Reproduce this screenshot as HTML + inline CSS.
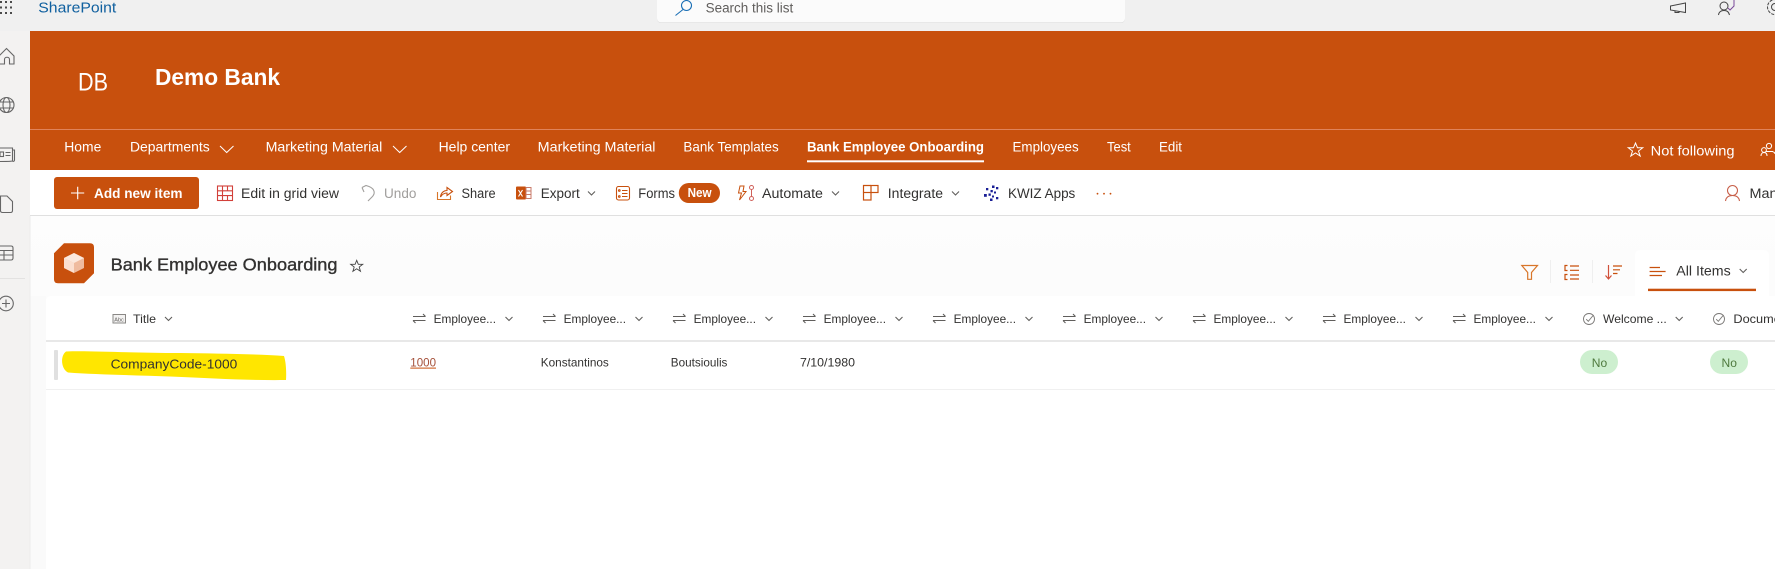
<!DOCTYPE html>
<html lang="en">
<head>
<meta charset="utf-8">
<title>Bank Employee Onboarding</title>
<style>
html,body{margin:0;padding:0;width:1775px;height:569px;overflow:hidden;background:#fff}
svg{display:block;position:absolute;left:0;top:0}
text{font-family:"Liberation Sans",sans-serif;white-space:pre}
.nav{font-size:14px;fill:#fff}
.cmd{font-size:13.5px;fill:#323130}
.hd{font-size:12px;fill:#323130}
.cell{font-size:12px;fill:#323130}
.ch{fill:none;stroke:#605e5c;stroke-width:1.1}
.rail{fill:none;stroke:#666;stroke-width:1.1}
.or{fill:none;stroke:#c8500d;stroke-width:1.2}
</style>
</head>
<body>
<svg width="1775" height="569" viewBox="0 0 1775 569" xmlns="http://www.w3.org/2000/svg">
<defs>
<linearGradient id="pg" x1="0" y1="0" x2="0" y2="1"><stop offset="0" stop-color="#fdfdfd"/><stop offset="1" stop-color="#f8f8f8"/></linearGradient>
<g id="swap" fill="none" stroke="#605e5c" stroke-width="1.1"><path d="M0.5 3.5H13M10.5 1L13 3.5"/><path d="M13 7.5H0.5M3 10L0.5 7.5"/></g>
<g id="chev"><path class="ch" d="M0 0L3.5 3.5L7 0"/></g>
<g id="chk" fill="none" stroke="#7a7876" stroke-width=".9"><circle cx="6" cy="6" r="5.5"/><path d="M3.2 6.2L5.3 8.3L10.5 2"/></g>
</defs>

<!-- backgrounds -->
<rect width="1775" height="569" fill="#fff"/>
<rect width="1775" height="31" fill="#f0f0f0"/>
<rect y="31" width="30" height="538" fill="#f3f2f1"/>
<rect x="30" y="31" width="1745" height="139" fill="#c8500d"/>
<rect x="30" y="129" width="1745" height="1" fill="#e0835a"/>
<rect x="30" y="170" width="1745" height="45" fill="#fff"/>
<rect x="30" y="215" width="1745" height="1.4" fill="#e0e0e0"/>
<rect x="30" y="216" width="1745" height="353" fill="url(#pg)"/>
<rect x="30" y="296" width="16" height="273" fill="#fafafa"/>
<rect x="29.5" y="216" width="1" height="353" fill="#ececec"/>

<!-- top bar -->
<g fill="#4a4a4a"><rect x="0" y="1" width="2" height="2"/><rect x="5" y="1" width="2" height="2"/><rect x="10" y="1" width="2" height="2"/><rect x="0" y="6.5" width="2" height="2"/><rect x="5" y="6.5" width="2" height="2"/><rect x="10" y="6.5" width="2" height="2"/><rect x="0" y="12" width="2" height="2"/><rect x="5" y="12" width="2" height="2"/><rect x="10" y="12" width="2" height="2"/></g>
<text x="38.3" y="12.7" font-size="15" fill="#10609f" textLength="78" lengthAdjust="spacingAndGlyphs">SharePoint</text>
<rect x="657" y="-6" width="468" height="29" rx="4" fill="#cfcfcf" opacity=".6"/>
<rect x="657" y="-6" width="468" height="28.4" rx="4" fill="#fbfbfb"/>
<circle cx="686.5" cy="5.5" r="5" fill="none" stroke="#1a6fb5" stroke-width="1.1"/>
<path d="M683 9.5L675.5 15.5" fill="none" stroke="#1a6fb5" stroke-width="1.1"/>
<text x="705.6" y="12.7" font-size="13.5" fill="#605e5c" textLength="87.6" lengthAdjust="spacingAndGlyphs">Search this list</text>
<g fill="none" stroke="#444" stroke-width="1">
<path d="M1670.5 6L1685.5 3V12.5L1670.5 10Z"/><path d="M1675 10.5V12.5H1679V11"/>
<circle cx="1724" cy="6" r="4"/><path d="M1718.5 15C1719 11.5 1721 10.5 1724 10.5C1727 10.5 1728.5 11.5 1729.5 15"/>
</g>
<path d="M1728 8L1730 10L1734 6V0" fill="none" stroke="#7a4a9a" stroke-width="1"/>
<circle cx="1775" cy="7" r="7.5" fill="none" stroke="#444" stroke-width="1" stroke-dasharray="3 1.2"/>
<circle cx="1775" cy="7" r="3.5" fill="none" stroke="#444" stroke-width="1"/>

<!-- left rail -->
<path class="rail" d="M-1 56L6.5 48.5L14 56V64H9.5V59.5C9.5 56.5 4.5 56.5 4.5 59.5V64H-1"/>
<g class="rail"><circle cx="6.5" cy="105" r="7.5"/><ellipse cx="6.5" cy="105" rx="3.5" ry="7.5"/><path d="M-1 102H14M-1 108H14"/></g>
<g class="rail"><path d="M-2 148H12.5V160.5C12.5 161.5 10 161.5 -2 161.5"/><path d="M12.5 150H14.5V160C14.5 161.5 13 161.5 12.5 161.5"/><rect x="0" y="152" width="3.5" height="4.5"/><path d="M5.5 152.5H10.5M5.5 155.5H10.5"/></g>
<path class="rail" d="M0.5 196H7L12.5 201.5V210.5Q12.5 212.5 10.5 212.5H2.5Q0.5 212.5 0.5 210.5Z"/>
<g class="rail"><path d="M-2 246H11Q13 246 13 248V258Q13 260 11 260H-2"/><path d="M-2 250.5H13M-2 255H13M4 250.5V260"/></g>
<rect x="0" y="278" width="25" height="1" fill="#e3e2e1"/>
<g class="rail"><circle cx="6" cy="303.5" r="7.3"/><path d="M6 299.5V307.5M2 303.5H10"/></g>

<!-- header -->
<text x="78" y="90.7" font-size="25" fill="#fff" textLength="30" lengthAdjust="spacingAndGlyphs">DB</text>
<text x="155" y="85" font-size="23" font-weight="bold" fill="#fff" textLength="125" lengthAdjust="spacingAndGlyphs">Demo Bank</text>

<!-- nav -->
<text class="nav" x="64.3" y="151.7" textLength="37" lengthAdjust="spacingAndGlyphs">Home</text>
<text class="nav" x="130" y="151.7" textLength="79.7" lengthAdjust="spacingAndGlyphs">Departments</text>
<path d="M220 146L226.7 152.5L233.5 146" fill="none" stroke="#fff" stroke-width="1"/>
<text class="nav" x="265.6" y="151.7" textLength="116.7" lengthAdjust="spacingAndGlyphs">Marketing Material</text>
<path d="M393 146L399.7 152.5L406.5 146" fill="none" stroke="#fff" stroke-width="1"/>
<text class="nav" x="438.6" y="151.7" textLength="71.4" lengthAdjust="spacingAndGlyphs">Help center</text>
<text class="nav" x="537.7" y="151.7" textLength="117.8" lengthAdjust="spacingAndGlyphs">Marketing Material</text>
<text class="nav" x="683.4" y="151.7" textLength="95.3" lengthAdjust="spacingAndGlyphs">Bank Templates</text>
<text class="nav" x="807" y="151.7" font-weight="bold" textLength="177" lengthAdjust="spacingAndGlyphs">Bank Employee Onboarding</text>
<rect x="807" y="160.3" width="177" height="2" fill="#fff"/>
<text class="nav" x="1012.5" y="151.7" textLength="66.2" lengthAdjust="spacingAndGlyphs">Employees</text>
<text class="nav" x="1107" y="151.7" textLength="23.8" lengthAdjust="spacingAndGlyphs">Test</text>
<text class="nav" x="1159" y="151.7" textLength="23" lengthAdjust="spacingAndGlyphs">Edit</text>
<path d="M1635.5 143L1637.5 147.8H1642.7L1638.5 151L1640.2 156L1635.5 153L1630.8 156L1632.5 151L1628.3 147.8H1633.5Z" fill="none" stroke="#fff" stroke-width="1"/>
<text class="nav" x="1650.7" y="155.3" textLength="83.8" lengthAdjust="spacingAndGlyphs">Not following</text>
<g fill="none" stroke="#fff" stroke-width="1"><circle cx="1769" cy="146" r="2.6"/><circle cx="1764" cy="150" r="2.4"/><path d="M1761 156C1761 153.5 1762.5 152.5 1764 152.5C1766 152.5 1767 153.5 1767 156"/><path d="M1766 151.5H1773M1772.5 151.5C1774 152 1775 153 1775 154"/></g>

<!-- command bar -->
<rect x="54" y="177" width="145" height="32" rx="3" fill="#c8500d"/>
<path d="M77.7 186.7V199.3M71 193H84.2" stroke="#fff" stroke-width="1.1" fill="none"/>
<text x="94" y="198" font-size="13.5" font-weight="bold" fill="#fff" textLength="88.5" lengthAdjust="spacingAndGlyphs">Add new item</text>

<g fill="none" stroke="#d2403a" stroke-width="1.1"><rect x="217.5" y="186" width="15" height="14.5"/><path d="M217.5 190.8H232.5M217.5 195.6H232.5M222.5 186V200.5M227.5 186V190.8M227.5 195.6V200.5"/></g>
<text class="cmd" x="241" y="198" textLength="98" lengthAdjust="spacingAndGlyphs">Edit in grid view</text>

<path d="M362 187.5L366 185.5L369 186.5C375 189 375.5 193.5 372 197L368 201M362 187.5L364 192" fill="none" stroke="#a19f9d" stroke-width="1.1"/>
<text class="cmd" x="384" y="198" style="fill:#a19f9d" textLength="32.4" lengthAdjust="spacingAndGlyphs">Undo</text>

<path d="M437.5 192V199.5H450.5V195.5" fill="none" stroke="#d8762a" stroke-width="1.1"/>
<path d="M440.5 197C441 192.5 444 190.5 447 190.5V187.5L452.5 191.5L447 195.5V193C444.5 193 442 194.5 440.5 197Z" fill="none" stroke="#c8500d" stroke-width="1.1"/>
<text class="cmd" x="461.5" y="198" textLength="34.1" lengthAdjust="spacingAndGlyphs">Share</text>

<rect x="516" y="186.5" width="10" height="13" rx="1" fill="#c8500d"/>
<path d="M518.5 190L522.5 196.5M522.5 190L518.5 196.5" stroke="#fff" stroke-width="1.1" fill="none"/>
<g fill="none" stroke="#c87a68" stroke-width="1"><rect x="526" y="187.5" width="5" height="11"/><path d="M526 191H531M526 194.5H531"/></g>
<text class="cmd" x="540.8" y="198" textLength="39" lengthAdjust="spacingAndGlyphs">Export</text>
<use href="#chev" x="588" y="191.5"/>

<g fill="none" stroke="#c8500d" stroke-width="1.1"><rect x="616.5" y="186.5" width="13" height="13.5" rx="2"/><path d="M622 190.5H627.5M622 193.5H627.5M622 196.5H627.5"/><circle cx="619.3" cy="190.5" r=".8"/><circle cx="619.3" cy="196.5" r=".8"/></g>
<text class="cmd" x="638.3" y="198" textLength="36.7" lengthAdjust="spacingAndGlyphs">Forms</text>
<rect x="678.8" y="183" width="41.2" height="20" rx="10" fill="#c8500d"/>
<text x="687.6" y="197" font-size="12.5" font-weight="bold" fill="#fff" textLength="24" lengthAdjust="spacingAndGlyphs">New</text>

<g fill="none" stroke-width="1"><path d="M744 186H740L738.5 193H741.5L739.5 200L746 191.5H743Z" stroke="#c8500d"/><circle cx="751.5" cy="187.5" r="2" stroke="#d0605a"/><circle cx="751.5" cy="198.5" r="2" stroke="#d0605a"/><path d="M751.5 189.5V196.5" stroke="#d0605a"/></g>
<text class="cmd" x="762" y="198" textLength="61" lengthAdjust="spacingAndGlyphs">Automate</text>
<use href="#chev" x="832" y="191.5"/>

<g fill="none" stroke="#c8500d" stroke-width="1.2"><rect x="863.5" y="192.5" width="7.5" height="7.5"/><rect x="871" y="185.5" width="7" height="7"/><path d="M863.5 192.5V185.5H871"/></g>
<text class="cmd" x="887.8" y="198" textLength="55.2" lengthAdjust="spacingAndGlyphs">Integrate</text>
<use href="#chev" x="952" y="191.5"/>

<g fill="#1a1f96"><rect x="992" y="185.5" width="2.5" height="2.5"/><rect x="996" y="187" width="2.3" height="2.3"/><rect x="986" y="188" width="2.3" height="2.3"/><rect x="990.5" y="190" width="2.3" height="2.3"/><rect x="994" y="191.5" width="2" height="2"/><rect x="984" y="194" width="2.8" height="2.8"/><rect x="988.5" y="193.5" width="2.3" height="2.3"/><rect x="992" y="195.5" width="2" height="2"/><rect x="996" y="197" width="2.3" height="2.3"/><rect x="990" y="198.5" width="2.5" height="2.5"/></g>
<text class="cmd" x="1008" y="198" textLength="67.3" lengthAdjust="spacingAndGlyphs">KWIZ Apps</text>
<g fill="#c8500d"><circle cx="1097.5" cy="193.7" r=".9"/><circle cx="1104" cy="193.7" r=".9"/><circle cx="1110.5" cy="193.7" r=".9"/></g>

<g fill="none" stroke="#c8604a" stroke-width="1.1"><circle cx="1732.5" cy="190.5" r="5"/><path d="M1725.5 201C1726 197.5 1728.5 195.5 1732.5 195.5C1736.5 195.5 1739 197.5 1739.5 201"/></g>
<text class="cmd" x="1749.5" y="198" textLength="28" lengthAdjust="spacingAndGlyphs">Man</text>

<!-- list heading -->
<path d="M64 243.3H90Q94 243.3 94 247.3V273.3L84 283.3H58Q54 283.3 54 279.3V253.3Z" fill="#c8500d"/>
<path d="M74 253L84 258V268L74 273L64 268V258Z" fill="#efbb9f"/>
<path d="M64 258L74 263L74 273L64 268Z" fill="#fbdfd0"/>
<path d="M74 253L84 258L74 263L64 258Z" fill="#fbe8dd"/>
<text x="110.6" y="270.7" font-size="17.5" fill="#323130" stroke="#323130" stroke-width=".35" textLength="226.9" lengthAdjust="spacingAndGlyphs">Bank Employee Onboarding</text>
<path d="M356.7 260.3L358.3 264.3H362.7L359.2 267L360.5 271.3L356.7 268.8L352.9 271.3L354.2 267L350.7 264.3H355.1Z" fill="none" stroke="#444" stroke-width=".9"/>

<!-- right tools -->
<path d="M1521.8 265.5H1537.5L1531.5 272.5V279.3H1527.7V272.5Z" fill="none" stroke="#d8762a" stroke-width="1.2"/>
<rect x="1550" y="260" width="1" height="23" fill="#efefef"/>
<g class="or"><path d="M1570 266H1579M1570 270.3H1579M1570 275H1579M1570 279H1579"/><path d="M1567.5 265.5H1565V270.5H1567.5M1567.5 274.5H1565V279.5H1567.5"/></g>
<rect x="1592" y="260" width="1" height="23" fill="#efefef"/>
<g class="or"><path d="M1608.5 265V278.5M1605.5 275.5L1608.5 279L1611.5 275.5" stroke="#d0503a"/><path d="M1613 266H1622M1613 269.8H1620M1613 273.5H1617.5"/></g>
<path d="M1635 296V256Q1635 250 1641 250H1763Q1769 250 1769 256V296Z" fill="#fff"/>
<g class="or"><path d="M1649.6 267.5H1660M1649.6 271.5H1665.6M1649.6 275.5H1662"/></g>
<text x="1676.3" y="275.7" font-size="13.5" fill="#323130" textLength="54.4" lengthAdjust="spacingAndGlyphs">All Items</text>
<use href="#chev" x="1739.7" y="269"/>
<rect x="1648" y="288.7" width="108" height="2.4" fill="#c8500d"/>

<!-- card -->
<path d="M46 569V301Q46 296 51 296H1775V569Z" fill="#fff"/>
<path d="M1635 296H1769V300H1635Z" fill="#fff"/>

<!-- column header -->
<g fill="none" stroke="#8a8886" stroke-width="1"><rect x="113" y="314.5" width="12.5" height="8.5" fill="#f3f2f1"/></g>
<text x="114.3" y="321.3" font-size="5.5" fill="#605e5c">Abc</text>
<text class="hd" x="133" y="323" textLength="23" lengthAdjust="spacingAndGlyphs">Title</text>
<use href="#chev" x="165" y="317"/>

<use href="#swap" x="412.5" y="313"/><text class="hd" x="433.6" y="323" textLength="62.4" lengthAdjust="spacingAndGlyphs">Employee...</text><use href="#chev" x="505.5" y="317"/>
<use href="#swap" x="542.5" y="313"/><text class="hd" x="563.6" y="323" textLength="62.4" lengthAdjust="spacingAndGlyphs">Employee...</text><use href="#chev" x="635.5" y="317"/>
<use href="#swap" x="672.5" y="313"/><text class="hd" x="693.6" y="323" textLength="62.4" lengthAdjust="spacingAndGlyphs">Employee...</text><use href="#chev" x="765.5" y="317"/>
<use href="#swap" x="802.5" y="313"/><text class="hd" x="823.6" y="323" textLength="62.4" lengthAdjust="spacingAndGlyphs">Employee...</text><use href="#chev" x="895.5" y="317"/>
<use href="#swap" x="932.5" y="313"/><text class="hd" x="953.6" y="323" textLength="62.4" lengthAdjust="spacingAndGlyphs">Employee...</text><use href="#chev" x="1025.5" y="317"/>
<use href="#swap" x="1062.5" y="313"/><text class="hd" x="1083.6" y="323" textLength="62.4" lengthAdjust="spacingAndGlyphs">Employee...</text><use href="#chev" x="1155.5" y="317"/>
<use href="#swap" x="1192.5" y="313"/><text class="hd" x="1213.5" y="323" textLength="62.4" lengthAdjust="spacingAndGlyphs">Employee...</text><use href="#chev" x="1285.5" y="317"/>
<use href="#swap" x="1322.5" y="313"/><text class="hd" x="1343.5" y="323" textLength="62.4" lengthAdjust="spacingAndGlyphs">Employee...</text><use href="#chev" x="1415.5" y="317"/>
<use href="#swap" x="1452.5" y="313"/><text class="hd" x="1473.5" y="323" textLength="62.4" lengthAdjust="spacingAndGlyphs">Employee...</text><use href="#chev" x="1545.5" y="317"/>
<use href="#chk" x="1583" y="313"/><text class="hd" x="1603" y="323" textLength="63.8" lengthAdjust="spacingAndGlyphs">Welcome ...</text><use href="#chev" x="1675.7" y="317"/>
<use href="#chk" x="1713" y="313"/><text class="hd" x="1733.4" y="323" textLength="58" lengthAdjust="spacingAndGlyphs">Document</text>

<rect x="46" y="340" width="1729" height="2" fill="#e8e8e8"/>

<!-- row -->
<rect x="54" y="350" width="4" height="30" rx="1" fill="#e0e0e0"/>
<path d="M66 351.5C90 350.5 130 353 180 353C215 353.5 255 354 284 356C286 362 286.5 372 286 380C250 380.5 215 378.5 170 376.5C130 375 95 374.5 68 372.5C61 369 60 356 66 351.5Z" fill="#ffe600"/>
<text x="110.6" y="368.7" font-size="13" fill="#323130" textLength="126.7" lengthAdjust="spacingAndGlyphs">CompanyCode-1000</text>
<text x="410.3" y="366.7" font-size="12" fill="#a5503a" textLength="25.7" lengthAdjust="spacingAndGlyphs">1000</text>
<rect x="410.3" y="367.6" width="25.7" height="1" fill="#c8500d"/>
<text class="cell" x="540.8" y="366.7" textLength="68" lengthAdjust="spacingAndGlyphs">Konstantinos</text>
<text class="cell" x="670.8" y="366.7" textLength="56.6" lengthAdjust="spacingAndGlyphs">Boutsioulis</text>
<text class="cell" x="800" y="366.7" textLength="55" lengthAdjust="spacingAndGlyphs">7/10/1980</text>
<rect x="1580" y="350" width="38" height="24" rx="12" fill="#cdefcf"/>
<text x="1591.8" y="367" font-size="12" fill="#4f7a3e" textLength="15.4" lengthAdjust="spacingAndGlyphs">No</text>
<rect x="1710" y="350" width="38" height="24" rx="12" fill="#cdefcf"/>
<text x="1721.5" y="367" font-size="12" fill="#4f7a3e" textLength="15.4" lengthAdjust="spacingAndGlyphs">No</text>
<rect x="46" y="389" width="1729" height="1" fill="#f0f0f0"/>
</svg>
</body>
</html>
